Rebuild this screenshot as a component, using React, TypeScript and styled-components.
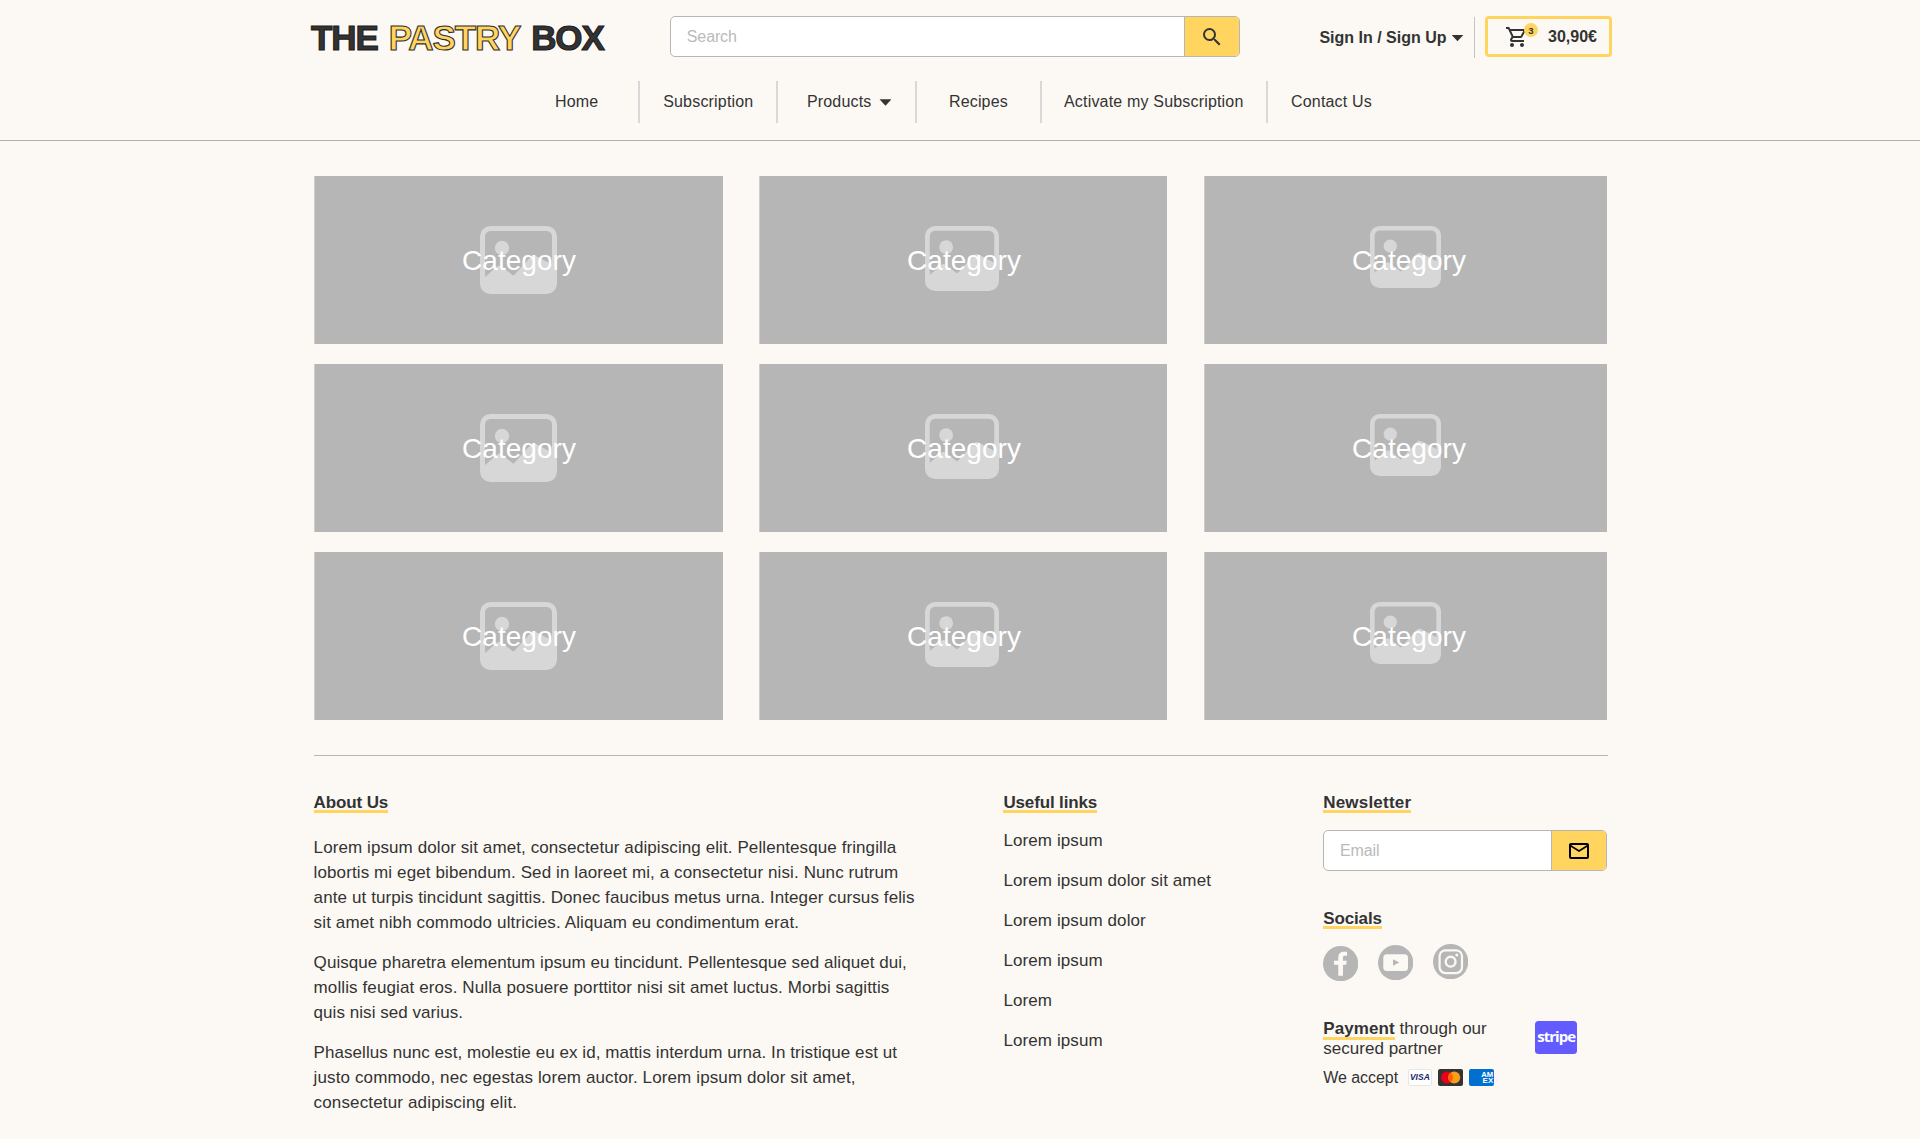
import React from "react";
import styled, { createGlobalStyle } from "styled-components";
import { MdSearch, MdMailOutline, MdOutlineShoppingCart } from "react-icons/md";

const color = {
  page: "#fcf9f4",
  ink: "#333333",
  grey: "#b6b6b6",
  rule: "#d8d8d8",
  yellow: "#ffd560",
};

const GlobalStyle = createGlobalStyle`
  * { box-sizing: border-box; }
  body {
    margin: 0;
    background: ${color.page};
    color: ${color.ink};
    font: 16px/18px "Liberation Sans", Arial, sans-serif;
    overflow: hidden;
  }
  p, h1, h2, ul { margin: 0; padding: 0; }
`;

/* Header */

const Header = styled.header`
  height: 141px;
  padding-top: 16px;
  border-bottom: 1px solid #aeaeae;
`;

const TopBar = styled.div`
  display: flex;
  align-items: center;
  height: 41px;
  padding-left: 311px;
`;

const Logo = styled.h1`
  display: flex;
  gap: 11px;
  width: 359px;
  padding-top: 2px;
  font-size: 35px;
  line-height: 41px;
  letter-spacing: -1.1px;
`;

const LogoWord = styled.span<{ $accent?: boolean }>`
  color: ${(p) => (p.$accent ? color.yellow : color.ink)};
  -webkit-text-stroke: 1.1px ${(p) => (p.$accent ? "#33302c" : "#1c1c1c")};
`;

const Field = styled.form<{ $width: number }>`
  display: flex;
  width: ${(p) => p.$width}px;
  height: 41px;
  border: 1px solid ${color.grey};
  border-radius: 5px;
  background: #fff;
  overflow: hidden;
`;

const FieldInput = styled.input`
  flex: 1;
  min-width: 0;
  padding: 0 0 0 15.8px;
  border: 0;
  outline: 0;
  background: transparent;
  font: inherit;
  letter-spacing: -0.12px;
  &::placeholder {
    color: #bababa;
    opacity: 1;
  }
`;

const FieldButton = styled.button<{ $tone: string }>`
  display: flex;
  align-items: center;
  justify-content: center;
  width: 55px;
  padding: 0;
  border: 0;
  border-left: 1px solid ${color.grey};
  background: ${color.yellow};
  color: ${(p) => p.$tone};
`;

const Account = styled.div`
  display: flex;
  align-items: center;
  gap: 5px;
  width: 234px;
  padding-left: 79.4px;
  padding-top: 2px;
  font-weight: bold;
  white-space: nowrap;
`;

const Caret = styled.i`
  width: 12px;
  height: 6.5px;
  margin-top: 1px;
  background: ${color.ink};
  clip-path: polygon(0 0, 100% 0, 50% 100%);
`;

const Separator = styled.div`
  width: 1px;
  height: 41px;
  margin-top: 2px;
  background: #c4c4c4;
`;

const Cart = styled.button`
  display: flex;
  align-items: center;
  width: 127px;
  height: 41px;
  margin-left: 10px;
  padding: 0 0 0 17.2px;
  border: 3px solid ${color.yellow};
  border-radius: 4px;
  background: transparent;
  color: ${color.ink};
  font: inherit;
  font-weight: bold;
`;

const CartIcon = styled.span`
  position: relative;
  display: flex;
  width: 42.8px;
`;

const Badge = styled.span`
  position: absolute;
  left: 18.8px;
  top: -2px;
  width: 14px;
  height: 14px;
  border-radius: 50%;
  background: ${color.yellow};
  font-size: 9.5px;
  line-height: 15px;
  text-align: center;
`;

const Price = styled.span`
  padding-top: 1px;
`;

const Nav = styled.nav`
  display: flex;
  height: 42px;
  margin-top: 24px;
  padding-left: 554px;
`;

const NavItem = styled.a<{ $width: number; $inset: number }>`
  display: flex;
  align-items: center;
  gap: 8px;
  width: ${(p) => p.$width}px;
  padding-left: ${(p) => p.$inset}px;
  border-right: 2px solid ${color.rule};
  letter-spacing: 0.18px;
  white-space: nowrap;
  &:last-child {
    border-right: 0;
  }
`;

/* Category grid */

const Grid = styled.main`
  display: grid;
  grid-template-columns: 445px 445px 403px;
  grid-auto-rows: 168px;
  row-gap: 20px;
  margin: 35px 313px 0 314px;
`;

const Card = styled.a<{ $gutter: number }>`
  position: relative;
  margin-right: ${(p) => p.$gutter}px;
  padding: 69px 0 0 147px;
  border-left: 1px solid #cfcdca;
  background: ${color.grey};
`;

const Picture = styled.svg`
  position: absolute;
  top: 50px;
  left: 165px;
`;

const CardLabel = styled.span`
  position: relative;
  display: block;
  color: #fff;
  font-size: 28px;
  line-height: 32px;
  letter-spacing: 0.05px;
`;

/* Footer */

const Footer = styled.footer`
  display: grid;
  grid-template-columns: 689.8px 319.8px 284px;
  margin: 35px 312px 0 313.6px;
  padding-top: 38px;
  border-top: 1px solid ${color.grey};
`;

const Block = styled.section`
  display: flex;
  flex-direction: column;
  align-items: flex-start;
`;

const Heading = styled.h2<{ $tracking: number }>`
  height: 19px;
  border-bottom: 3px solid ${color.yellow};
  font-size: 17px;
  line-height: 17px;
  letter-spacing: ${(p) => p.$tracking}px;
  white-space: nowrap;
`;

const Copy = styled.div`
  display: flex;
  flex-direction: column;
  gap: 15px;
  margin-top: 22px;
`;

const Line = styled.span<{ $tracking: number }>`
  display: block;
  font-size: 17px;
  line-height: 25px;
  letter-spacing: ${(p) => p.$tracking}px;
  white-space: nowrap;
`;

const LinkList = styled.ul`
  margin-top: 8px;
  list-style: none;
  font-size: 17px;
  line-height: 40px;
  letter-spacing: 0.1px;
`;

const NewsletterSlot = styled.div`
  margin: 17px 0 39px;
`;

const Socials = styled.div`
  display: flex;
  align-items: flex-start;
  gap: 19.7px;
  margin-top: 14.5px;
  height: 37.5px;
`;

const SocialIcon = styled.svg<{ $drop: number }>`
  width: 35.3px;
  height: 35.3px;
  margin-top: ${(p) => p.$drop}px;
`;

const Payment = styled.div`
  display: flex;
  gap: 48px;
  margin-top: 38px;
`;

const PaymentText = styled.p`
  width: 164px;
  font-size: 17px;
  line-height: 20px;
  letter-spacing: 0.03px;
`;

const Underlined = styled.strong`
  display: inline-block;
  margin-bottom: -4px;
  border-bottom: 3px solid ${color.yellow};
  line-height: 16px;
  letter-spacing: 0.1px;
`;

const StripeBadge = styled.div`
  width: 42px;
  height: 33px;
  margin-top: 2px;
  border-radius: 3.5px;
  background: #635bff;
  color: #fff;
  font: 700 15px/30px "Open Sans", "Noto Sans", sans-serif;
  letter-spacing: -1px;
  text-align: center;
`;

const Accept = styled.div`
  display: flex;
  align-items: center;
  height: 17px;
  margin-top: 10px;
`;

const AcceptLabel = styled.span`
  width: 84.7px;
  padding-top: 1px;
  letter-spacing: -0.04px;
`;

const Cards = styled.div`
  display: flex;
  gap: 6px;
`;

const Visa = styled.span`
  width: 24px;
  height: 17px;
  border: 1px solid #e6e6e6;
  border-radius: 2px;
  background: #fff;
  color: #1a1f71;
  font: italic bold 8.5px/15px "Liberation Sans", Arial, sans-serif;
  text-align: center;
`;

const categories = [
  { gutter: 36, width: 77, height: 68 },
  { gutter: 37, width: 74, height: 65 },
  { gutter: 0, width: 71, height: 62 },
];

const navItems = [
  { label: "Home", width: 86, inset: 0.9 },
  { label: "Subscription", width: 138, inset: 23.2 },
  { label: "Products", width: 139, inset: 28.9, caret: true },
  { label: "Recipes", width: 125, inset: 31.9 },
  { label: "Activate my Subscription", width: 226, inset: 22 },
  { label: "Contact Us", width: 120, inset: 23 },
];

const paragraphs: { text: string; tracking: number }[][] = [
  [
    { text: "Lorem ipsum dolor sit amet, consectetur adipiscing elit. Pellentesque fringilla", tracking: 0.092 },
    { text: "lobortis mi eget bibendum. Sed in laoreet mi, a consectetur nisi. Nunc rutrum", tracking: 0.109 },
    { text: "ante ut turpis tincidunt sagittis. Donec faucibus metus urna. Integer cursus felis", tracking: 0.104 },
    { text: "sit amet nibh commodo ultricies. Aliquam eu condimentum erat.", tracking: 0.137 },
  ],
  [
    { text: "Quisque pharetra elementum ipsum eu tincidunt. Pellentesque sed aliquet dui,", tracking: 0.06 },
    { text: "mollis feugiat eros. Nulla posuere porttitor nisi sit amet luctus. Morbi sagittis", tracking: 0.11 },
    { text: "quis nisi sed varius.", tracking: 0.05 },
  ],
  [
    { text: "Phasellus nunc est, molestie eu ex id, mattis interdum urna. In tristique est ut", tracking: 0.065 },
    { text: "justo commodo, nec egestas lorem auctor. Lorem ipsum dolor sit amet,", tracking: 0.12 },
    { text: "consectetur adipiscing elit.", tracking: 0.15 },
  ],
];

const links = ["Lorem ipsum", "Lorem ipsum dolor sit amet", "Lorem ipsum dolor", "Lorem ipsum", "Lorem", "Lorem ipsum"];

function Placeholder({ width, height }: { width: number; height: number }) {
  return (
    <Picture width={width} height={height} viewBox="0 0 77 68" preserveAspectRatio="none" fill="#d7d7d7">
      <rect x="2.5" y="2.5" width="72" height="63" rx="8" fill="none" stroke="#d7d7d7" strokeWidth="5" />
      <circle cx="22" cy="22" r="7.2" />
      <path d="M4 52 17 40.6Q19 39 21.5 40.6L33.5 49.8 51 30.5Q53 28.5 55.5 29.8L73 39V60Q73 64 68 64H9Q4 64 4 60Z" />
    </Picture>
  );
}

export default function App() {
  return (
    <>
      <GlobalStyle />
      <Header>
        <TopBar>
          <Logo>
            <LogoWord>THE</LogoWord>
            <LogoWord $accent>PASTRY</LogoWord>
            <LogoWord>BOX</LogoWord>
          </Logo>
          <Field $width={570}>
            <FieldInput placeholder="Search" />
            <FieldButton type="button" $tone={color.ink}>
              <MdSearch size={24} />
            </FieldButton>
          </Field>
          <Account>
            Sign In / Sign Up
            <Caret />
          </Account>
          <Separator />
          <Cart>
            <CartIcon>
              <MdOutlineShoppingCart size={24} />
              <Badge>3</Badge>
            </CartIcon>
            <Price>30,90€</Price>
          </Cart>
        </TopBar>
        <Nav>
          {navItems.map((item) => (
            <NavItem key={item.label} $width={item.width} $inset={item.inset}>
              {item.label}
              {item.caret && <Caret />}
            </NavItem>
          ))}
        </Nav>
      </Header>

      <Grid>
        {[0, 1, 2].flatMap((row) =>
          categories.map((c, col) => (
            <Card key={`${row}-${col}`} $gutter={c.gutter}>
              <Placeholder width={c.width} height={c.height} />
              <CardLabel>Category</CardLabel>
            </Card>
          ))
        )}
      </Grid>

      <Footer>
        <Block>
          <Heading $tracking={-0.12}>About Us</Heading>
          <Copy>
            {paragraphs.map((lines, i) => (
              <p key={i}>
                {lines.map((line) => (
                  <Line key={line.text} $tracking={line.tracking}>
                    {line.text}
                  </Line>
                ))}
              </p>
            ))}
          </Copy>
        </Block>

        <Block>
          <Heading $tracking={-0.14}>Useful links</Heading>
          <LinkList>
            {links.map((label, i) => (
              <li key={i}>{label}</li>
            ))}
          </LinkList>
        </Block>

        <Block>
          <Heading $tracking={0.21}>Newsletter</Heading>
          <NewsletterSlot>
            <Field $width={284}>
              <FieldInput placeholder="Email" />
              <FieldButton type="button" $tone="#000">
                <MdMailOutline size={24} />
              </FieldButton>
            </Field>
          </NewsletterSlot>
          <Heading $tracking={-0.12}>Socials</Heading>
          <Socials>
            <SocialIcon $drop={2} viewBox="0 0 35.3 35.3">
              <circle cx="17.65" cy="17.65" r="17.65" fill={color.grey} />
              <path
                d="M15.3 29.7V18.7H11V14.7H15.3V11.5C15.3 7.5 17.5 5.7 21 5.7H24V9.8H22C20.6 9.8 20 10.4 20 11.8V14.7H23.7L23.2 18.7H20V29.7Z"
                fill={color.page}
              />
            </SocialIcon>
            <SocialIcon $drop={1} viewBox="0 0 35.3 35.3">
              <circle cx="17.65" cy="17.65" r="17.65" fill={color.grey} />
              <rect x="5.3" y="9.2" width="24.7" height="16.9" rx="3.5" fill={color.page} />
              <path d="M15 14.3 21.3 17.5 15 20.8Z" fill={color.grey} />
            </SocialIcon>
            <SocialIcon $drop={0} viewBox="0 0 35.3 35.3">
              <circle cx="17.65" cy="17.65" r="17.65" fill={color.grey} />
              <g fill="none" stroke={color.page}>
                <rect x="6.6" y="6.3" width="22.4" height="22.8" rx="5.8" strokeWidth="2.2" />
                <circle cx="17.6" cy="17.7" r="4.9" strokeWidth="2.4" />
              </g>
              <circle cx="23.8" cy="11.1" r="1.5" fill={color.page} />
            </SocialIcon>
          </Socials>
          <Payment>
            <PaymentText>
              <Underlined>Payment</Underlined> through our
              <br />
              secured partner
            </PaymentText>
            <StripeBadge>stripe</StripeBadge>
          </Payment>
          <Accept>
            <AcceptLabel>We accept</AcceptLabel>
            <Cards>
              <Visa>VISA</Visa>
              <svg width="25" height="17" viewBox="0 0 25 17">
                <rect width="25" height="17" rx="2" fill="#333" />
                <circle cx="9" cy="8.5" r="6" fill="#eb001b" />
                <circle cx="16.2" cy="8.5" r="6" fill="#f79e1b" />
                <path d="M12.6 3.7a6 6 0 0 1 0 9.6 6 6 0 0 1 0-9.6Z" fill="#ff5f00" />
              </svg>
              <svg width="25" height="17" viewBox="0 0 25 17">
                <rect width="25" height="17" rx="2" fill="#016fd0" />
                <g fill="#fff" fontFamily="Liberation Sans, Arial, sans-serif" fontWeight="bold" fontSize="7">
                  <text x="12.2" y="8.2" textLength="12" lengthAdjust="spacingAndGlyphs">AM</text>
                  <text x="13.6" y="13.6" textLength="10.6" lengthAdjust="spacingAndGlyphs">EX</text>
                </g>
              </svg>
            </Cards>
          </Accept>
        </Block>
      </Footer>
    </>
  );
}
